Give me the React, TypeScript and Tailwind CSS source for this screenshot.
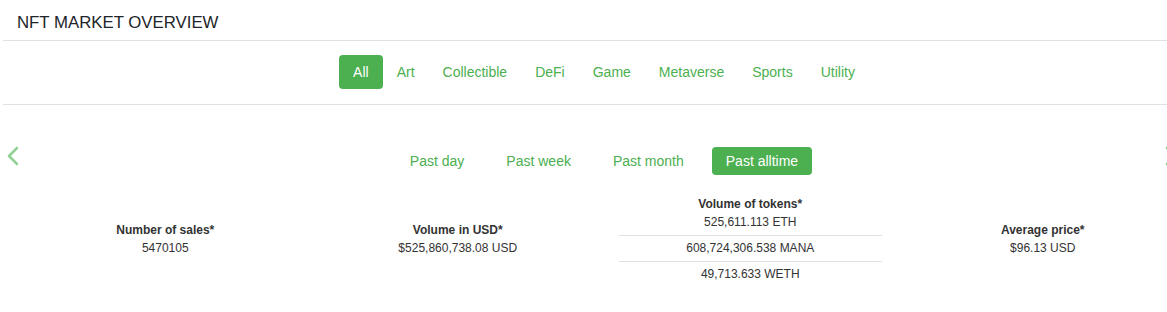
import React from 'react';

const categories = ['All', 'Art', 'Collectible', 'DeFi', 'Game', 'Metaverse', 'Sports', 'Utility'];
const periods = ['Past day', 'Past week', 'Past month', 'Past alltime'];

function Chevron({ dir }: { dir: 'left' | 'right' }) {
  return (
    <svg width="14" height="20" viewBox="0 0 14 20" fill="none">
      <polyline
        points={dir === 'left' ? '11,2 3,10 11,18' : '3,2 11,10 3,18'}
        stroke="#93d396"
        strokeWidth="2.6"
        strokeLinecap="round"
        strokeLinejoin="round"
      />
    </svg>
  );
}

export default function App() {
  const activeCat = 'All';
  const activePeriod = 'Past alltime';

  return (
    <div className="w-full h-[312px] overflow-hidden bg-white font-['Liberation_Sans',Arial,sans-serif]">
      <div className="ml-[3px] w-[1202px]">
        {/* Header */}
        <div className="border-b border-[#dee2e6] px-[14px] pt-[13px] pb-[7px] text-[16.8px] leading-[20px] text-[#212529]">
          NFT MARKET OVERVIEW
        </div>

        {/* Categories */}
        <div className="flex justify-center border-b border-[#dee2e6] pt-[14px] pb-[15px]">
          {categories.map((c) => (
            <button
              key={c}
              className={`px-[14px] py-[7px] text-[14px] leading-[20px] rounded-[4px] ${
                c === activeCat ? 'bg-[#4caf50] text-white' : 'text-[#4caf50]'
              }`}
            >
              {c}
            </button>
          ))}
        </div>

        {/* Carousel */}
        <div className="relative pt-[42px]">
          <div className="absolute left-[3px] top-[41px]">
            <Chevron dir="left" />
          </div>
          <div className="absolute left-[1161px] top-[41px]">
            <Chevron dir="right" />
          </div>

          <div className="flex justify-center gap-[14px]">
            {periods.map((p) => (
              <button
                key={p}
                className={`px-[14px] py-[4px] text-[14px] leading-[20px] rounded-[4px] ${
                  p === activePeriod ? 'bg-[#4caf50] text-white' : 'text-[#4caf50]'
                }`}
              >
                {p}
              </button>
            ))}
          </div>

          <div className="mt-[20px] px-[16px] flex items-start text-[12px] leading-[18px] text-[#333] text-center">
            <div className="flex-1 mt-[26px]">
              <div className="font-bold">Number of sales*</div>
              <div>5470105</div>
            </div>
            <div className="flex-1 mt-[26px]">
              <div className="font-bold">Volume in USD*</div>
              <div>$525,860,738.08 USD</div>
            </div>
            <div className="flex-1">
              <div className="font-bold">Volume of tokens*</div>
              <div className="mx-[15px]">
                <div className="pb-[4px]">525,611.113 ETH</div>
                <div className="border-t border-[#dee2e6] pt-[3px] pb-[4px]">608,724,306.538 MANA</div>
                <div className="border-t border-[#dee2e6] pt-[3px] pb-[4px]">49,713.633 WETH</div>
              </div>
            </div>
            <div className="flex-1 mt-[26px]">
              <div className="font-bold">Average price*</div>
              <div>$96.13 USD</div>
            </div>
          </div>
        </div>
      </div>
    </div>
  );
}
